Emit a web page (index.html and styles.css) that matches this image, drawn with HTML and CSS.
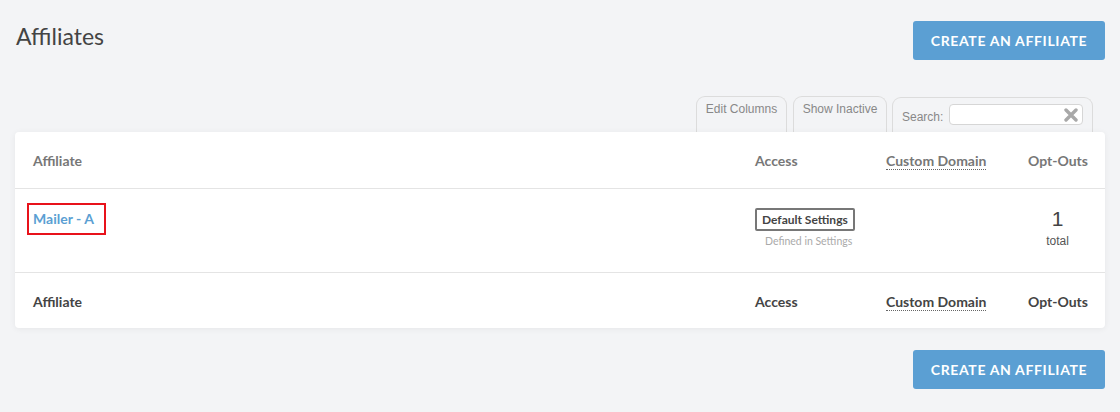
FILE: index.html
```html
<!DOCTYPE html>
<html>
<head>
<meta charset="utf-8">
<link rel="stylesheet" href="styles.css">
</head>
<body>
<div class="page">
  <div class="top">
    <h1 class="title">Affiliates</h1>
    <button class="btn">CREATE AN AFFILIATE</button>
  </div>
  <div class="toolbar">
    <div class="tab">Edit Columns</div>
    <div class="tab">Show Inactive</div>
    <div class="tab search">
      <span class="search-label">Search:</span>
      <span class="search-box">
        <svg class="clear" width="14" height="14" viewBox="0 0 14 14"><path d="M2 2 L12 12 M12 2 L2 12" stroke="#a8a8a8" stroke-width="3.4" stroke-linecap="round"/></svg>
      </span>
    </div>
  </div>
  <div class="card">
    <table class="tbl">
      <colgroup>
        <col class="c1"><col class="c2"><col class="c3"><col class="c4">
      </colgroup>
      <thead>
        <tr class="head">
          <th>Affiliate</th>
          <th>Access</th>
          <th><span class="dotted">Custom Domain</span></th>
          <th class="right">Opt-Outs</th>
        </tr>
      </thead>
      <tbody>
        <tr class="row">
          <td><a class="name" href="#">Mailer - A</a></td>
          <td>
            <span class="badge">Default Settings</span>
            <div class="note">Defined in Settings</div>
          </td>
          <td></td>
          <td class="count"><div class="num">1</div><div class="unit">total</div></td>
        </tr>
      </tbody>
      <tfoot>
        <tr class="foot">
          <th>Affiliate</th>
          <th>Access</th>
          <th><span class="dotted">Custom Domain</span></th>
          <th class="right">Opt-Outs</th>
        </tr>
      </tfoot>
    </table>
  </div>
  <div class="bottom">
    <button class="btn">CREATE AN AFFILIATE</button>
  </div>
</div>
</body>
</html>
```

FILE: styles.css
```css
* { box-sizing: border-box; }
html, body { margin: 0; padding: 0; }
body {
  background: #f3f4f6;
  font-family: "Lato", "Open Sans", sans-serif;
  color: #444;
  width: 1120px;
  height: 412px;
  overflow: hidden;
}
.page { padding: 21px 15px 0 15px; }
.top {
  display: flex;
  justify-content: space-between;
  align-items: flex-start;
}
.title {
  margin: 0;
  padding-top: 0;
  padding-left: 1px;
  font-size: 23px;
  font-weight: 400;
  color: #444;
  line-height: 30px;
}
.btn {
  background: #5b9fd3;
  color: #fff;
  border: none;
  border-radius: 3px;
  width: 192px;
  height: 39px;
  font-family: "Lato", "Open Sans", sans-serif;
  font-size: 14px;
  font-weight: 700;
  letter-spacing: 0.65px;
  padding: 0;
}
.toolbar {
  display: flex;
  justify-content: flex-end;
  gap: 6px;
  margin-top: 36px;
  padding-right: 12px;
  height: 36px;
}
.tab {
  border: 1px solid #dcdcdc;
  border-bottom: none;
  border-radius: 9px 9px 0 0;
  font-family: "Liberation Sans", Arial, sans-serif;
  font-size: 12px;
  color: #888;
  padding: 5px 0 0 0;
  width: 91px;
  text-align: center;
  white-space: nowrap;
  height: 36px;
}
.tab:nth-child(2) { width: 94px; }
.tab.search {
  display: flex;
  align-items: flex-start;
  gap: 6px;
  padding: 6px 9px 0 9px;
  width: 201px;
  margin-left: -1px;
  margin-top: 1px;
  height: 35px;
}
.search-label { margin-top: 6px; }
.search-box {
  width: 134px;
  height: 21px;
  background: #fff;
  border: 1px solid #d6d6d6;
  border-radius: 4px;
  display: flex;
  justify-content: flex-end;
  align-items: center;
  padding-right: 4px;
}
.card {
  background: #fff;
  border-radius: 4px;
  box-shadow: 0 1px 6px rgba(0,0,0,0.06);
  position: relative;
  margin-top: 0;
}
.tbl {
  width: 100%;
  border-collapse: collapse;
  table-layout: fixed;
}
.c1 { width: 722px; }
.c2 { width: 131px; }
.c3 { width: 142px; }
.c4 { width: 95px; }
th {
  text-align: left;
  font-size: 14px;
  font-weight: 700;
  padding: 2px 18px 0 18px;
  height: 56px;
  white-space: nowrap;
}
.head th { color: #777; border-bottom: 1px solid #e4e4e4; }
.foot th { color: #444; border-top: 1px solid #e4e4e4; }
th.right { text-align: right; }
.dotted { border-bottom: 1px dotted #666; }
.row td {
  vertical-align: top;
  height: 84px;
  padding: 14px 18px 0 18px;
}
.name {
  display: inline-block;
  margin-left: -6px;
  border: 2px solid #e8121b;
  padding: 5px 10px 5px 4px;
  color: #5b9fd3;
  font-size: 14px;
  font-weight: 700;
  text-decoration: none;
  line-height: 18px;
}
.badge {
  display: inline-block;
  margin-top: 5px;
  border: 2px solid #777;
  border-radius: 2px;
  padding: 2px 5px;
  font-size: 12px;
  font-weight: 700;
  color: #444;
  line-height: 15px;
  white-space: nowrap;
}
.note {
  font-size: 10.5px;
  color: #aaa;
  margin-top: 4px;
  padding-left: 10px;
  white-space: nowrap;
}
.row td.count { padding: 17px 18px 0 18px; text-align: center; }
.num {
  font-family: "Liberation Sans", Arial, sans-serif;
  font-size: 21px;
  color: #444;
  line-height: 26px;
  text-align: center;
}
.unit {
  font-family: "Liberation Sans", Arial, sans-serif;
  font-size: 12px;
  color: #555;
  text-align: center;
  margin-top: 2px;
}
.bottom {
  display: flex;
  justify-content: flex-end;
  margin-top: 22px;
}
```
